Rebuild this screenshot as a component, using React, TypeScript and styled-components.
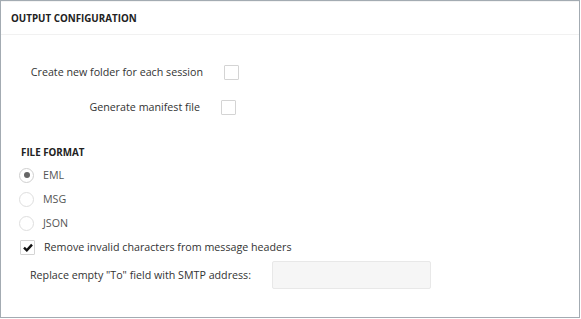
import styled, { createGlobalStyle } from "styled-components";
import { useState } from "react";

const GlobalStyle = createGlobalStyle`
  body {
    margin: 0;
    background: #fff;
    font-family: "Open Sans", "Liberation Sans", sans-serif;
  }
`;

const formats = ["EML", "MSG", "JSON"];

const App = () => {
  const [format, setFormat] = useState("EML");
  const [newFolder, setNewFolder] = useState(false);
  const [manifest, setManifest] = useState(false);
  const [removeInvalid, setRemoveInvalid] = useState(true);

  return (
    <>
      <GlobalStyle />
      <Panel>
        <Header>OUTPUT CONFIGURATION</Header>
        <Body>
          <OptionGrid>
            <OptionLabel>Create new folder for each session</OptionLabel>
            <Box $nudge={2} onClick={() => setNewFolder(!newFolder)}>
              {newFolder && <Check />}
            </Box>
            <OptionLabel $shift={3}>Generate manifest file</OptionLabel>
            <Box $nudge={-1} onClick={() => setManifest(!manifest)}>
              {manifest && <Check />}
            </Box>
          </OptionGrid>

          <SectionTitle>FILE FORMAT</SectionTitle>
          <List>
            {formats.map((f) => (
              <Row key={f} onClick={() => setFormat(f)}>
                <Radio $on={format === f} />
                <RowText>{f}</RowText>
              </Row>
            ))}
            <Row onClick={() => setRemoveInvalid(!removeInvalid)}>
              <Box $nudge={1}>{removeInvalid && <Check />}</Box>
              <RowText $dark>Remove invalid characters from message headers</RowText>
            </Row>
          </List>
          <SmtpRow>
            <SmtpLabel>Replace empty "To" field with SMTP address:</SmtpLabel>
            <SmtpInput type="text" />
          </SmtpRow>
        </Body>
      </Panel>
    </>
  );
};

const Check = () => (
  <svg width="10" height="9" viewBox="0 0 10 9">
    <path d="M1 4.6 L3.8 7.3 L9 1.6" fill="none" stroke="#111" strokeWidth="2.4" />
  </svg>
);

const Panel = styled.div`
  width: 578px;
  height: 316px;
  border: 1px solid #a3abb2;
  background: #fff;
  display: flex;
  flex-direction: column;
`;

const Header = styled.div`
  height: 32px;
  border-top: 1px solid #f3f3f3;
  border-bottom: 1px solid #f1f1f1;
  padding-left: 10px;
  display: flex;
  align-items: center;
  font-size: 9.8px;
  font-weight: 700;
  color: #222;
`;

const Body = styled.div`
  display: flex;
  flex-direction: column;
`;

const OptionGrid = styled.div`
  display: grid;
  grid-template-columns: 202px 16px;
  column-gap: 19px;
  row-gap: 15px;
  margin-top: 27px;
  align-items: center;
`;

const OptionLabel = styled.div<{ $shift?: number }>`
  height: 20px;
  line-height: 20px;
  text-align: right;
  font-size: 10.7px;
  color: #333;
  padding-right: ${(p) => p.$shift ?? 0}px;
`;

const Box = styled.div<{ $nudge?: number }>`
  width: 13px;
  height: 13px;
  border: 1px solid #d4d4d4;
  border-radius: 1px;
  background: #fff;
  display: flex;
  align-items: center;
  justify-content: center;
  margin-left: ${(p) => p.$nudge ?? 0}px;
  cursor: pointer;
`;

const SectionTitle = styled.div`
  margin-top: 29px;
  padding-left: 20px;
  height: 14px;
  line-height: 14px;
  font-size: 9.8px;
  font-weight: 700;
  color: #222;
`;

const List = styled.div`
  display: flex;
  flex-direction: column;
  margin-top: 3px;
  padding-left: 18px;
`;

const Row = styled.div`
  height: 24px;
  display: flex;
  align-items: center;
  gap: 9px;
  cursor: pointer;
`;

const Radio = styled.span<{ $on: boolean }>`
  width: 13px;
  height: 13px;
  border-radius: 50%;
  border: 1px solid ${(p) => (p.$on ? "#cfcfcf" : "#dedede")};
  background: #fff;
  display: flex;
  align-items: center;
  justify-content: center;
  &::after {
    content: "";
    display: ${(p) => (p.$on ? "block" : "none")};
    width: 6px;
    height: 6px;
    border-radius: 50%;
    background: #666;
  }
`;

const RowText = styled.span<{ $dark?: boolean }>`
  font-size: 10.7px;
  color: ${(p) => (p.$dark ? "#333" : "#555")};
`;

const SmtpRow = styled.div`
  display: flex;
  align-items: center;
  margin-top: 2px;
  padding-left: 29px;
`;

const SmtpLabel = styled.label`
  width: 242px;
  font-size: 10.7px;
  color: #333;
`;

const SmtpInput = styled.input`
  width: 157px;
  height: 26px;
  padding: 0;
  border: 1px solid #e8e8e8;
  border-radius: 2px;
  background: #f6f6f6;
  box-sizing: content-box;
  outline: none;
`;

export default App;
